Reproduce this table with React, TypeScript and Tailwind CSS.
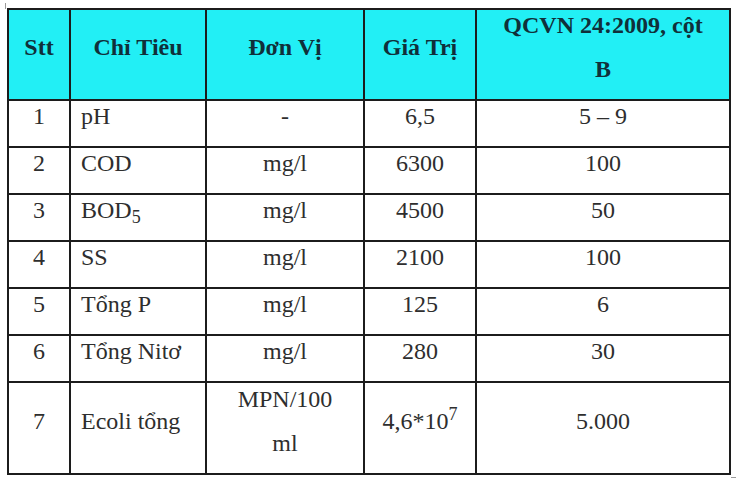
import React from "react";

const headCell =
  "bg-[#22eff5] flex items-center justify-center text-center pb-[15px] font-bold text-[#10303a] font-['Liberation_Serif',serif]";
const cell =
  "bg-white flex items-center justify-center text-center pb-[15px] font-['Liberation_Serif',serif]";
const leftCell =
  "bg-white flex items-center justify-start pl-[10px] pb-[15px] font-['Liberation_Serif',serif]";

type Row = { stt: string; name: React.ReactNode; unit: React.ReactNode; value: React.ReactNode; limit: string };

const rows: Row[] = [
  { stt: "1", name: "pH", unit: "-", value: "6,5", limit: "5 – 9" },
  { stt: "2", name: "COD", unit: "mg/l", value: "6300", limit: "100" },
  {
    stt: "3",
    name: (
      <span>
        BOD<sub>5</sub>
      </span>
    ),
    unit: "mg/l",
    value: "4500",
    limit: "50",
  },
  { stt: "4", name: "SS", unit: "mg/l", value: "2100", limit: "100" },
  { stt: "5", name: "Tổng P", unit: "mg/l", value: "125", limit: "6" },
  { stt: "6", name: "Tổng Nitơ", unit: "mg/l", value: "280", limit: "30" },
  {
    stt: "7",
    name: "Ecoli tổng",
    unit: (
      <span>
        MPN/100
        <br />
        ml
      </span>
    ),
    value: (
      <span>
        4,6*10<sup>7</sup>
      </span>
    ),
    limit: "5.000",
  },
];

export default function App() {
  return (
    <div className="w-[739px] h-[483px] bg-white relative overflow-hidden pl-[7px] pt-[8px] text-[24px] leading-[44px] text-[#2e2e2e] font-['Liberation_Serif','Times_New_Roman',serif]">
      <span className="absolute left-[5px] top-[3px] w-[1px] h-[6px] bg-[#9a9a9a]" />
      <span className="absolute left-[731px] top-[477px] w-[5px] h-[1px] bg-[#9a9a9a]" />
      <div className="grid w-[724px] grid-cols-[60px_134px_156px_110px_252px] grid-rows-[89px_45px_45px_45px_45px_45px_45px_90px] gap-[2px] p-[2px] bg-[#1c1c1c]">
        <div className={headCell}>Stt</div>
        <div className={headCell}>Chỉ Tiêu</div>
        <div className={headCell}>Đơn Vị</div>
        <div className={headCell}>Giá Trị</div>
        <div className={headCell}>
          <span>
            QCVN 24:2009, cột
            <br />B
          </span>
        </div>
        {rows.map((r) => (
          <React.Fragment key={r.stt}>
            <div className={cell}>{r.stt}</div>
            <div className={leftCell}>{r.name}</div>
            <div className={cell}>{r.unit}</div>
            <div className={cell}>{r.value}</div>
            <div className={cell}>{r.limit}</div>
          </React.Fragment>
        ))}
      </div>
    </div>
  );
}
